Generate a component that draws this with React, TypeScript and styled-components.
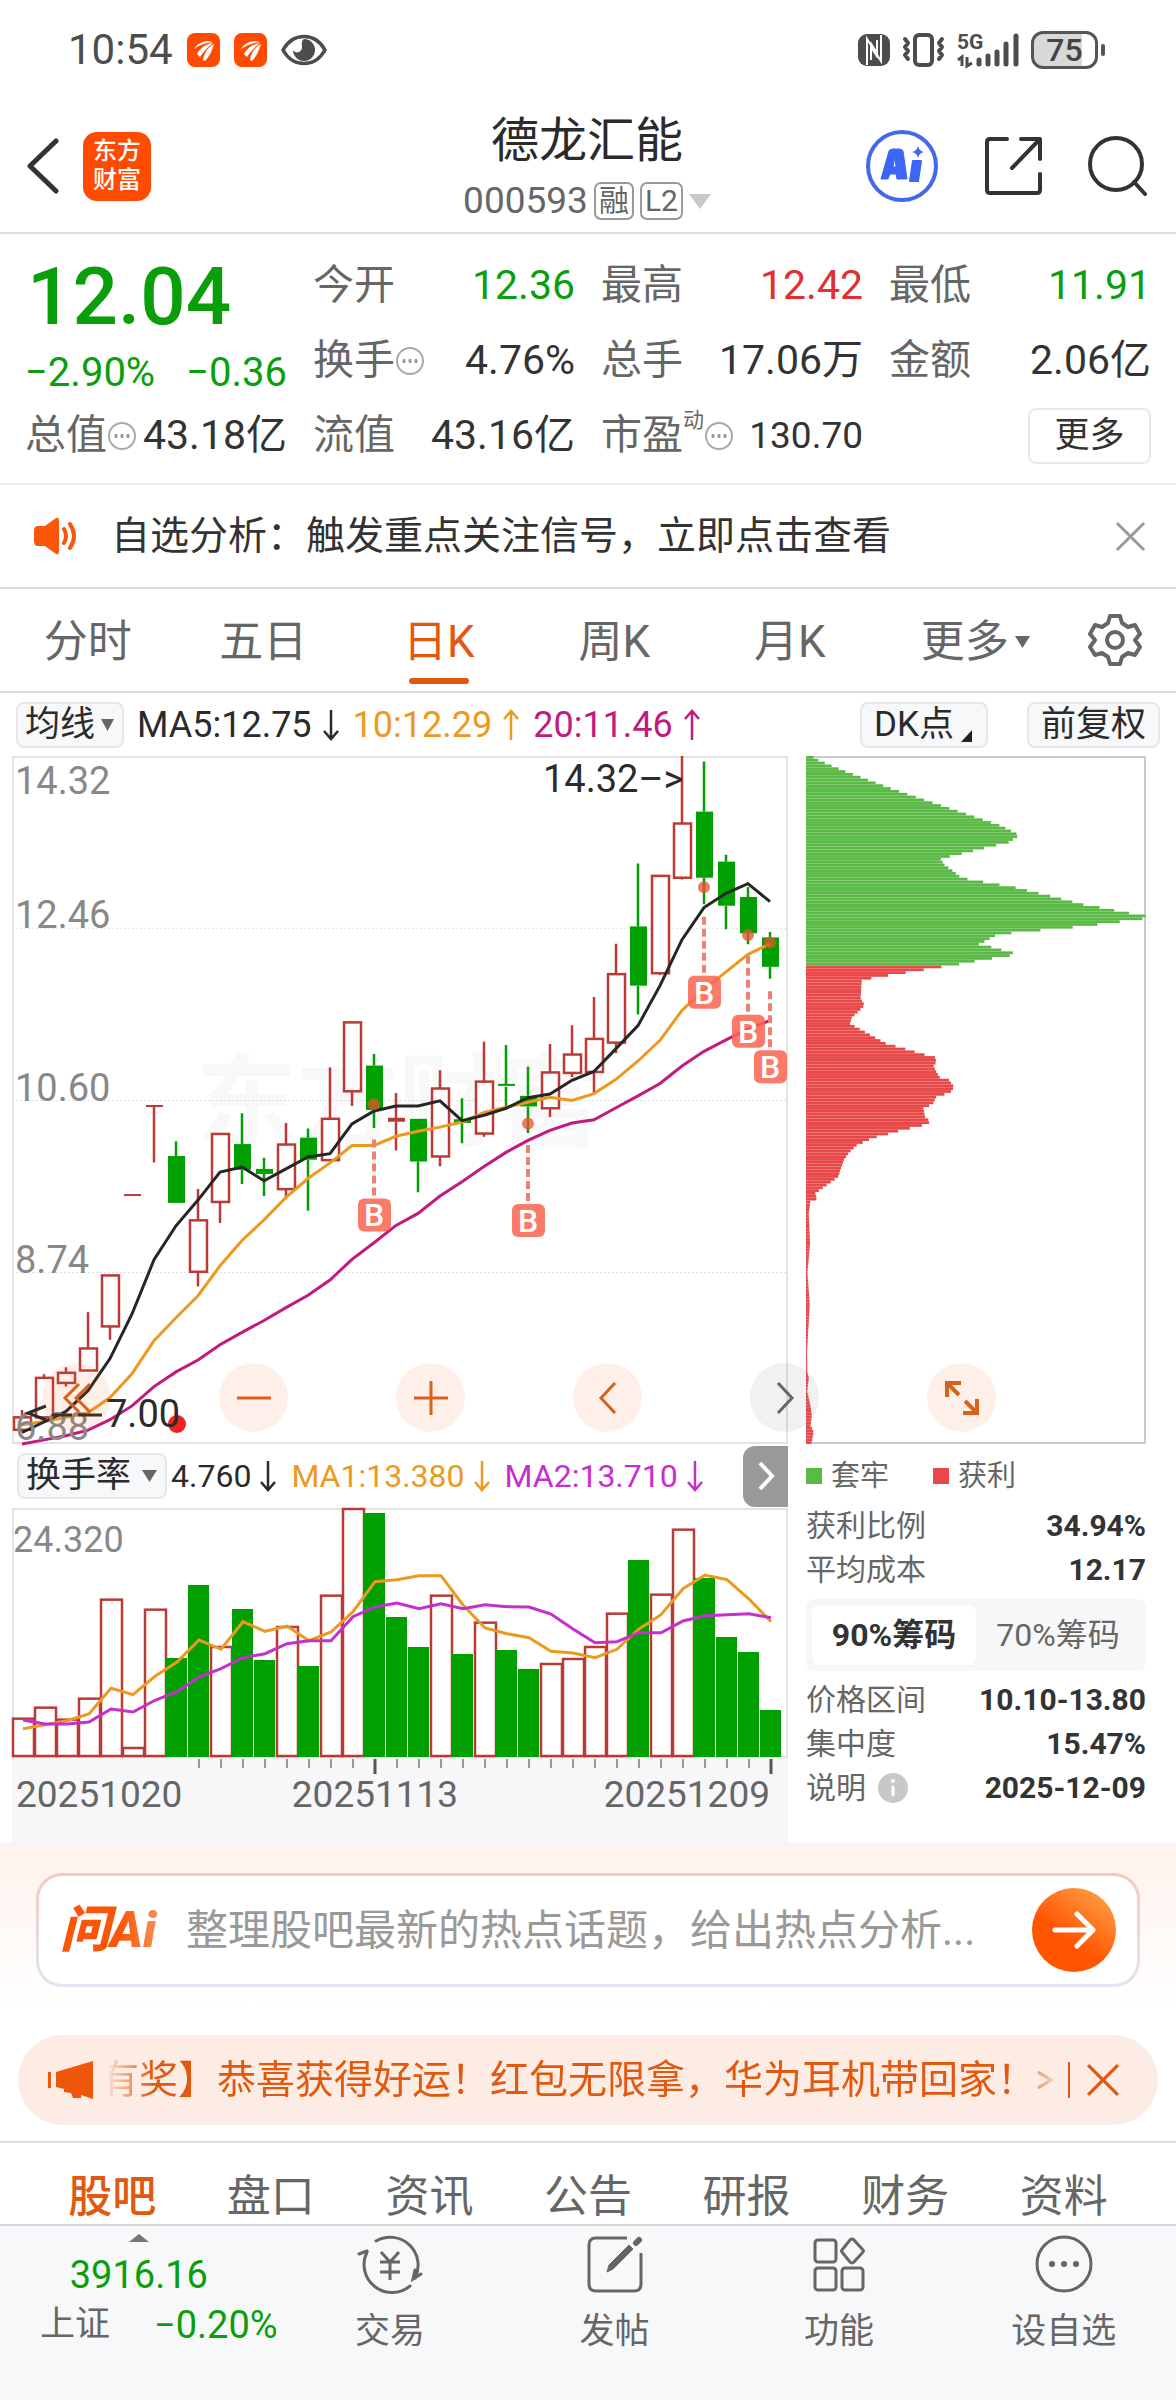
import React, { useState } from "react";
import styled, { createGlobalStyle, css } from "styled-components";

const c = {
  ink: "#2b2b2b",
  text: "#333333",
  sub: "#666666",
  mute: "#999999",
  green: "#0b9e0b",
  red: "#e03030",
  brand: "#e2580f",
  line: "#dddddd",
  up: "#bb3a36",
  down: "#00a000",
  ma5: "#262626",
  ma10: "#ec9a1f",
  ma20: "#c01c80",
  violet: "#c530cc",
};

const Global = createGlobalStyle`
  * { box-sizing: border-box; }
  body { margin: 0; background: #fff; }
  body, button, input, select {
    font-family: Roboto, "Noto Sans CJK SC", sans-serif;
    color: ${c.text};
  }
  button, input, select { margin: 0; padding: 0; border: 0; background: none; appearance: none; outline: none; }
  svg { display: block; flex: none; }
  h1, p, dl, dt, dd { margin: 0; font-weight: 400; }
`;

const Page = styled.div`
  display: flex;
  flex-direction: column;
  min-height: 100vh;
  background: #fff;
`;

const Row = styled.div<{ $gap?: number }>`
  display: flex;
  align-items: center;
  gap: ${(p) => p.$gap ?? 0}px;
`;

/* ---------- status bar ---------- */

const StatusBar = styled.div`
  display: flex;
  align-items: center;
  justify-content: space-between;
  height: 100px;
  padding: 0 78px 0 68px;
`;

const Clock = styled.span`
  font-size: 42px;
  line-height: 48px;
  color: #4d4d4d;
`;

const Battery = styled.div`
  position: relative;
  display: flex;
  align-items: center;
  justify-content: center;
  width: 67px;
  height: 38px;
  border: 3px solid #555;
  border-radius: 12px;
  background: linear-gradient(90deg, #d8d8d8 78%, #fff 78%);
  font-size: 32px;
  line-height: 32px;
  font-weight: 500;
  color: #444;
  &::after {
    content: "";
    position: absolute;
    right: -10px;
    top: 10px;
    width: 4px;
    height: 12px;
    border-radius: 2px;
    background: #555;
  }
`;

const AppMark = () => (
  <svg width="33" height="34" viewBox="0 0 33 34">
    <rect width="33" height="34" rx="8" fill="#ff4a00" />
    <path d="M7 16C11 9 19 7 26 9C18 10 13 12 7 16Z" fill="#fff" />
    <path d="M10 21C13 15 19 11 26 10C21 14 17 18 13 24Z" fill="#fff" />
    <path d="M16 27C17 20 21 14 27 11C25 17 23 23 18 28Z" fill="#fff" />
  </svg>
);

const Eye = () => (
  <svg width="46" height="32" viewBox="0 0 46 32">
    <path d="M2 16C12 -2 34 -2 44 16C34 34 12 34 2 16Z" fill="none" stroke="#4d4d4d" strokeWidth="3.500" />
    <path d="M23 5A11 11 0 1 1 12 16C14 20 21 19 21 13C21 10 20 7 23 5Z" fill="#4d4d4d" />
  </svg>
);

const Nfc = () => (
  <svg width="32" height="32" viewBox="0 0 32 32">
    <rect width="32" height="32" rx="9" fill="#4d4d4d" />
    <path d="M9 31V5L23 27V1" fill="none" stroke="#fff" strokeWidth="2" />
    <path d="M13 26V13L20 24M19 6V19L12 8" fill="none" stroke="#fff" strokeWidth="2" />
  </svg>
);

const Vibrate = () => (
  <svg width="43" height="34" viewBox="0 0 43 34">
    <rect x="13" y="2" width="17" height="30" rx="4" fill="none" stroke="#4d4d4d" strokeWidth="4" />
    <path d="M3 6L6 10L3 14L6 18L3 22L6 26M40 6L37 10L40 14L37 18L40 22L37 26" fill="none" stroke="#4d4d4d" strokeWidth="4" strokeLinecap="round" strokeLinejoin="round" />
  </svg>
);

const Signal = () => (
  <svg width="62" height="42" viewBox="0 -3 62 42">
    <text x="0" y="17" fontSize="21" fontWeight="700" fill="#4d4d4d">5G</text>
    <path d="M1 28L5 25V34M10 25V34L15 31" fill="none" stroke="#4d4d4d" strokeWidth="3" />
    <path d="M22 28V32M31 24V32M40 20V32M49 12V32M59 4V32" stroke="#4d4d4d" strokeWidth="5" strokeLinecap="round" />
  </svg>
);

/* ---------- header ---------- */

const Header = styled.header`
  display: grid;
  grid-template-columns: 1fr auto 1fr;
  align-items: center;
  height: 134px;
  padding: 0 28px 0 26px;
  border-bottom: 2px solid ${c.line};
`;

const IconButton = styled.button`
  display: flex;
  align-items: center;
  justify-content: center;
  cursor: pointer;
`;

const Brand = styled.div`
  display: flex;
  flex-direction: column;
  align-items: center;
  justify-content: center;
  width: 68px;
  height: 69px;
  border-radius: 14px;
  background: #ff4a00;
  color: #fff;
  font-size: 24px;
  line-height: 29px;
  font-weight: 500;
`;

const Heading = styled.div`
  padding-top: 6px;
`;

const Title = styled.h1`
  font-size: 48px;
  line-height: 64px;
  color: ${c.ink};
  text-align: center;
`;

const CodeRow = styled(Row)`
  height: 56px;
  font-size: 37px;
  line-height: 56px;
  color: ${c.sub};
`;

const Badge = styled.span`
  height: 38px;
  padding: 0 3px;
  border: 2px solid ${c.mute};
  border-radius: 7px;
  font-size: 30px;
  line-height: 34px;
  color: ${c.sub};
`;

const HeaderTools = styled(Row)`
  justify-content: flex-end;
`;

const Triangle = ({ w, h, fill, up }: { w: number; h: number; fill: string; up?: boolean }) => (
  <svg width={w} height={h} viewBox="0 0 10 10" preserveAspectRatio="none">
    <path d={up ? "M0 10H10L5 0Z" : "M0 0H10L5 10Z"} fill={fill} />
  </svg>
);

const AiBadge = () => (
  <svg width="74" height="74" viewBox="0 0 74 74">
    <circle cx="37" cy="37" r="34" fill="none" stroke="#4468ea" strokeWidth="4" />
    <path d="M16 50L24 22Q25 20 28 20H34Q37 20 38 22L42 50H32L31 45H25L23 50ZM28 38H31L30 28Z" fill="#3e66f6" fillRule="evenodd" stroke="#3e66f6" strokeWidth="1" strokeLinejoin="round" />
    <path d="M48 32H56L53 52H45Z" fill="#3e66f6" stroke="#3e66f6" strokeWidth="2" strokeLinejoin="round" />
    <path d="M53 17Q54 22 59 23Q54 24 53 29Q52 24 47 23Q52 22 53 17Z" fill="#3e66f6" />
  </svg>
);

const Share = () => (
  <svg width="59" height="60" viewBox="0 0 59 60" fill="none" stroke="#333" strokeWidth="4" strokeLinecap="round" strokeLinejoin="round">
    <path d="M23 3H6Q3 3 3 6V54Q3 57 6 57H53Q56 57 56 54V38" />
    <path d="M37 3H56V23M55 4L28 32" />
  </svg>
);

const Search = () => (
  <svg width="60" height="60" viewBox="0 0 60 60" fill="none" stroke="#333" strokeWidth="4" strokeLinecap="round">
    <circle cx="28" cy="28" r="26" />
    <path d="M46 46L57 58" />
  </svg>
);

/* ---------- quote ---------- */

const Quote = styled.section`
  display: grid;
  grid-template-columns: repeat(4, 1fr);
  grid-auto-rows: 75px;
  column-gap: 26px;
  padding: 14px 25px 10px;
  border-bottom: 2px solid #eeeeee;
`;

const PriceCell = styled.div`
  grid-row: span 2;
`;

const Price = styled.p`
  font-size: 80px;
  line-height: 98px;
  font-weight: 500;
  color: ${c.green};
  padding-left: 2px;
`;

const Change = styled.p`
  display: flex;
  justify-content: space-between;
  font-size: 40px;
  line-height: 54px;
  color: ${c.green};
`;

const Field = styled.div`
  display: flex;
  align-items: center;
  justify-content: space-between;
  white-space: nowrap;
  font-size: 41px;
  line-height: 75px;
`;

const FieldLabel = styled.span`
  display: flex;
  align-items: center;
  color: ${c.sub};
`;

const Tiny = styled.sup`
  align-self: flex-start;
  font-size: 21px;
  line-height: 44px;
`;

const FieldValue = styled.span<{ $tone?: string; $small?: boolean }>`
  font-size: ${(p) => (p.$small ? 37 : 41)}px;
  color: ${(p) => p.$tone ?? c.text};
`;

const MoreButton = styled.button`
  justify-self: end;
  align-self: center;
  width: 123px;
  height: 56px;
  border: 2px solid #e8e8e8;
  border-radius: 8px;
  font-size: 35px;
  line-height: 48px;
`;

const Dots = () => (
  <svg width="30" height="30" viewBox="0 0 30 30">
    <circle cx="15" cy="15" r="13" fill="none" stroke="#aaa" strokeWidth="2" />
    <path d="M8 13.500H10V16.500H8ZM14 13.500H16V16.500H14ZM20 13.500H22V16.500H20Z" fill="#999" stroke="#999" />
  </svg>
);

/* ---------- notice ---------- */

const Notice = styled.section`
  display: flex;
  align-items: center;
  height: 104px;
  padding: 0 30px 0 32px;
  border-bottom: 2px solid ${c.line};
`;

const NoticeText = styled.p`
  flex: 1;
  padding-left: 33px;
  font-size: 39px;
  line-height: 56px;
`;

const Speaker = () => (
  <svg width="46" height="38" viewBox="0 0 46 38">
    <path d="M2 14Q2 9 6 9H13L24 1Q27 0 27 4V34Q27 38 24 37L13 29H6Q2 29 2 24Z" fill="#fb5607" />
    <path d="M32 12Q36 19 32 26M38 7Q46 19 38 31" fill="none" stroke="#fb5607" strokeWidth="4" strokeLinecap="round" />
  </svg>
);

const Cross = ({ size, color, width }: { size: number; color: string; width: number }) => (
  <svg width={size} height={size} viewBox="0 0 32 32">
    <path d="M2 2L30 30M30 2L2 30" stroke={color} strokeWidth={width} fill="none" />
  </svg>
);

/* ---------- tabs ---------- */

const PeriodTabs = styled.nav`
  display: grid;
  grid-template-columns: repeat(6, 351fr) 246fr;
  height: 104px;
  border-bottom: 2px solid ${c.line};
`;

const Tab = styled.button<{ $on?: boolean }>`
  position: relative;
  display: flex;
  align-items: center;
  justify-content: center;
  gap: 6px;
  font-size: 44px;
  line-height: 64px;
  color: ${(p) => (p.$on ? c.brand : c.sub)};
  font-weight: ${(p) => (p.$on ? 500 : 400)};
`;

const PeriodTab = styled(Tab)`
  padding-top: 3px;
  font-weight: 400;
  ${(p) =>
    p.$on &&
    css`
      &::after {
        content: "";
        position: absolute;
        bottom: 7px;
        left: 50%;
        width: 60px;
        height: 6px;
        margin-left: -30px;
        border-radius: 3px;
        background: ${c.brand};
      }
    `}
`;

const MoreTab = styled(PeriodTab)`
  padding-left: 20px;
`;

const Gear = () => (
  <svg width="54" height="54" viewBox="0 0 54 54" fill="none" stroke="#666" strokeWidth="4" strokeLinejoin="round">
    <path d="M22 3H32L34 10L40 14L47 12L52 21L47 27L52 34L47 42L40 40L34 44L32 51H22L20 44L14 40L7 42L2 34L7 27L2 21L7 12L14 14L20 10Z" />
    <circle cx="27" cy="27" r="8" />
  </svg>
);

/* ---------- indicator bar ---------- */

const IndicatorBar = styled.div`
  display: flex;
  align-items: center;
  justify-content: space-between;
  height: 63px;
  padding: 0 16px;
`;

const chip = css`
  height: 46px;
  border: 2px solid #e6e7ea;
  border-radius: 8px;
  background: #f7f8fa;
  font-size: 35px;
  line-height: 42px;
  white-space: nowrap;
`;

const ChipButton = styled.button`
  ${chip}
  display: flex;
  align-items: center;
  padding: 0 12px;
  color: ${c.ink};
`;

const SelectBox = styled.label<{ $w: number }>`
  ${chip}
  display: flex;
  align-items: center;
  justify-content: space-between;
  width: ${(p) => p.$w}px;
  padding: 0 8px 0 7px;
`;

const Select = styled.select`
  flex: 1;
  min-width: 0;
  height: 42px;
  font-size: 35px;
  line-height: 42px;
  color: ${c.ink};
`;

const Reading = styled.span<{ $tone: string; $small?: boolean }>`
  display: flex;
  align-items: center;
  gap: ${(p) => (p.$small ? 8 : 10)}px;
  font-size: ${(p) => (p.$small ? 32 : 36)}px;
  line-height: 46px;
  color: ${(p) => p.$tone};
  white-space: nowrap;
`;

const Arrow = ({ up }: { up?: boolean }) => (
  <svg width="18" height="32" viewBox="0 0 18 32" fill="none" stroke="currentColor" strokeWidth="2.500">
    <path d={up ? "M9 31V2M2 10L9 2L16 10" : "M9 1V30M2 22L9 30L16 22"} />
  </svg>
);

/* ---------- charts ---------- */

const ChartGrid = styled.section`
  position: relative;
  display: grid;
  grid-template-columns: 776fr 340fr;
  column-gap: 18px;
  padding: 0 30px 0 12px;
`;

const Plot = styled.svg`
  width: 100%;
  height: auto;
  overflow: visible;
`;

const Floating = styled.div`
  position: absolute;
  top: 607px;
  left: 42px;
  display: flex;
  gap: 108px;
`;

const RoundButton = styled.button<{ $grey?: boolean }>`
  display: flex;
  align-items: center;
  justify-content: center;
  width: 69px;
  height: 69px;
  border-radius: 50%;
  color: ${(p) => (p.$grey ? "#666" : "#d8611b")};
  background: ${(p) => (p.$grey ? "rgba(120,120,120,0.1)" : "rgba(250,110,40,0.1)")};
`;

const SubBar = styled.div`
  display: flex;
  align-items: center;
  height: 64px;
  padding-left: 5px;
`;

const Expand = styled.button`
  display: flex;
  align-items: center;
  justify-content: center;
  width: 45px;
  height: 61px;
  margin-left: auto;
  border-radius: 12px 0 0 12px;
  background: #999;
`;

const SubReadings = styled(Row)`
  padding-left: 4px;
`;

type Candle = [kind: "u" | "d", high: number, open: number, close: number, low: number];

// Plot units run downward from the top edge of the price frame to its bottom edge.
const TOP = 35;
const BOTTOM = 1533;
const py = (v: number) => ((v - TOP) / (BOTTOM - TOP)) * 688;
const px = (i: number) => 10 + i * 22;

const candles: Candle[] = [
  ["u", 1459, 1475, 1502, 1502], ["u", 1381, 1389, 1475, 1475], ["u", 1366, 1378, 1400, 1408],
  ["u", 1246, 1325, 1373, 1373], ["u", 1166, 1166, 1277, 1306], ["u", 991, 991, 991, 991],
  ["u", 797, 797, 797, 920], ["d", 874, 906, 1008, 1008], ["u", 978, 1046, 1158, 1190],
  ["u", 858, 858, 1006, 1052], ["d", 813, 880, 936, 967], ["d", 910, 934, 945, 993],
  ["u", 834, 881, 978, 995], ["d", 846, 866, 914, 1025], ["u", 713, 825, 915, 915],
  ["u", 615, 615, 765, 797], ["d", 684, 709, 806, 845], ["u", 769, 827, 831, 894],
  ["d", 825, 825, 918, 985], ["u", 719, 759, 907, 928], ["d", 780, 826, 834, 878],
  ["u", 657, 744, 857, 864], ["d", 664, 751, 755, 797], ["d", 711, 775, 798, 856],
  ["u", 662, 724, 802, 821], ["u", 621, 685, 725, 734], ["u", 560, 651, 723, 770],
  ["u", 444, 510, 659, 682], ["d", 269, 406, 535, 598], ["u", 296, 296, 508, 512],
  ["u", 35, 182, 300, 304], ["d", 47, 156, 300, 358], ["d", 250, 265, 361, 412],
  ["d", 320, 342, 421, 445], ["d", 418, 430, 494, 520],
];

const ma5 = [1508, 1485, 1462, 1417, 1347, 1250, 1132, 1058, 1002, 941, 930, 960, 934, 908, 901, 836, 808, 797, 797, 786, 829, 817, 802, 779, 771, 741, 722, 672, 622, 535, 435, 365, 334, 313, 352];
const ma10 = [1491, 1484, 1475, 1465, 1432, 1380, 1308, 1258, 1210, 1145, 1090, 1045, 996, 955, 921, 883, 883, 863, 852, 843, 832, 811, 800, 789, 778, 785, 770, 739, 699, 654, 589, 543, 505, 467, 444];
const ma20 = [1533, 1524, 1515, 1503, 1480, 1450, 1408, 1376, 1350, 1317, 1290, 1264, 1236, 1209, 1176, 1131, 1095, 1057, 1031, 993, 962, 929, 898, 872, 850, 834, 827, 801, 775, 748, 710, 678, 653, 629, 611];

const buys = [
  { i: 16, dot: 793, from: 870 },
  { i: 23, dot: 835, from: 882 },
  { i: 31, dot: 321, from: 385 },
  { i: 33, dot: 425, from: 470 },
  { i: 34, dot: 441, from: 547 },
];

const line = (vals: number[], x: (i: number) => number, y: (v: number) => number) =>
  vals.map((v, i) => `${x(i)},${y(v).toFixed(1)}`).join(" ");

const PriceChart = () => (
  <Plot viewBox="0 0 776 688" role="img" aria-label="日K线">
    <text x="184" y="382" fontSize="101" fontWeight="700" fill="#f8f8f9">东方财富</text>
    {[410, 785, 1160].map((v) => (
      <path key={v} d={`M0 ${py(v)}H776`} stroke="#ddd" strokeDasharray="2 2" />
    ))}
    <rect x="1" y="1" width="774" height="686" fill="none" stroke="#e3e3e3" strokeWidth="2" />
    {candles.map(([kind, high, a, b, low], i) => {
      const x = px(i);
      const color = kind === "u" ? c.up : c.down;
      const flat = b - a < 6;
      return (
        <g key={i} stroke={color} strokeWidth="2.500">
          <path d={`M${x} ${py(high)}V${py(a)}M${x} ${py(b)}V${py(low)}`} />
          {flat ? (
            <path d={`M${x - 8} ${py(a)}H${x + 9}`} strokeWidth={b - a === 4 && kind === "u" ? 4 : 2} />
          ) : kind === "u" ? (
            <rect x={x - 8} y={py(a)} width="17" height={py(b) - py(a)} fill="#fff" />
          ) : (
            <rect x={x - 8} y={py(a)} width="17" height={py(b) - py(a)} fill={color} stroke="none" />
          )}
        </g>
      );
    })}
    <polyline points={line(ma20, px, py)} fill="none" stroke={c.ma20} strokeWidth="3" />
    <polyline points={line(ma10, px, py)} fill="none" stroke={c.ma10} strokeWidth="3" />
    <polyline points={line(ma5, px, py)} fill="none" stroke={c.ma5} strokeWidth="3" />
    {buys.map(({ i, dot, from }) => {
      const x = px(i);
      const y = py(from);
      return (
        <g key={i}>
          <circle cx={x} cy={py(dot)} r="6" fill="#e8502f" opacity="0.75" />
          <path d={`M${x} ${y}V${y + 57}`} stroke="#f08070" strokeWidth="4" strokeDasharray="8 4" />
          <rect x={x - 16} y={y + 59} width="33" height="33" rx="6" fill="#fa6450" opacity="0.85" />
          <text x={x} y={y + 87} fontSize="32" fontWeight="500" fill="#fff" textAnchor="middle">B</text>
        </g>
      );
    })}
    <g fontSize="38" fill="#888">
      <text x="3" y="38">14.32</text>
      <text x="3" y="172">12.46</text>
      <text x="3" y="345">10.60</text>
      <text x="3" y="517">8.74</text>
      <text x="3" y="684">6.88</text>
    </g>
    <text x="531" y="36" fontSize="38" fill={c.ink}>14.32–&gt;</text>
    <circle cx="165" cy="668" r="9" fill="#f02222" />
    <text x="94" y="671" fontSize="38" fill={c.ink}>7.00</text>
    <path d="M34 650L16 657L34 664M40 659H60M66 659H90" fill="none" stroke={c.ink} strokeWidth="3" />
  </Plot>
);

// Turnover bars use their own downward units.
const vy = (v: number) => ((v - 234) / (978 - 234)) * 248;
const vx = (i: number) => 11 + i * 22;

const turnover: [string, number][] = [
  ["u", 866], ["u", 833], ["u", 869], ["u", 806], ["u", 509], ["u", 954], ["u", 539], ["d", 684], ["d", 465],
  ["u", 651], ["d", 537], ["d", 690], ["u", 591], ["d", 708], ["u", 497], ["u", 237], ["d", 249], ["d", 561],
  ["d", 651], ["u", 497], ["d", 672], ["u", 578], ["d", 660], ["d", 717], ["u", 702], ["u", 687], ["u", 651],
  ["u", 551], ["d", 390], ["u", 494], ["u", 299], ["d", 444], ["d", 621], ["d", 666], ["d", 840],
];
const tm1 = [896, 884, 872, 852, 775, 794, 739, 696, 630, 658, 575, 604, 588, 632, 606, 545, 455, 449, 437, 437, 525, 594, 611, 623, 664, 669, 683, 658, 597, 554, 476, 435, 449, 507, 575];
const tm2 = [870, 882, 882, 876, 837, 846, 811, 785, 741, 716, 683, 671, 641, 632, 632, 560, 531, 519, 536, 521, 536, 524, 530, 531, 552, 597, 638, 635, 608, 608, 573, 557, 554, 551, 563];

const TurnoverChart = () => (
  <Plot viewBox="0 0 776 335" role="img" aria-label="换手率">
    <rect y="250" width="776" height="85" fill="#f7f7fa" />
    <rect x="1" y="1" width="774" height="248" fill="none" stroke="#e3e3e3" strokeWidth="2" />
    {turnover.map(([kind, v], i) =>
      kind === "u" ? (
        <rect key={i} x={vx(i) - 10} y={vy(v)} width="21" height={248 - vy(v)} fill="#fff" stroke={c.up} strokeWidth="2.500" />
      ) : (
        <rect key={i} x={vx(i) - 11} y={vy(v)} width="21" height={249 - vy(v)} fill={c.down} />
      )
    )}
    <polyline points={line(tm1, vx, vy)} fill="none" stroke={c.ma10} strokeWidth="3" />
    <polyline points={line(tm2, vx, vy)} fill="none" stroke={c.violet} strokeWidth="3" />
    <text x="1" y="44" fontSize="36" fill="#888">24.320</text>
    {Array.from({ length: 27 }, (_, k) => k + 8).map((i) => {
      const major = i === 16 || i === 34;
      return <path key={i} d={`M${vx(i)} 251V${major ? 266 : 260}`} stroke={major ? "#555" : "#999"} strokeWidth={major ? 3 : 2} />;
    })}
    <g fontSize="37" fill={c.sub}>
      <text x="4" y="299">20251020</text>
      <text x="363" y="299" textAnchor="middle">20251113</text>
      <text x="758" y="299" textAnchor="end">20251209</text>
    </g>
  </Plot>
);

// Chip distribution outline: [level, width] knots, rows between them are interpolated.
const knots: [number, number][] = [
  [35, 10], [48, 40], [72, 120], [110, 260], [150, 423], [190, 585], [208, 633], [213, 622], [220, 610], [232, 538],
  [245, 468], [251, 433], [256, 400], [262, 403], [275, 415], [288, 440], [300, 460], [306, 485], [312, 532],
  [324, 627], [330, 660], [342, 728], [361, 830], [367, 877], [380, 970], [386, 1018], [392, 952], [398, 887],
  [404, 822], [410, 728], [416, 634], [422, 571], [435, 538], [447, 505], [453, 552], [460, 586], [466, 620],
  [472, 568], [478, 516], [485, 464], [491, 412], [497, 361], [503, 308], [509, 257], [515, 205], [521, 167],
  [565, 163], [577, 173], [590, 155], [602, 137], [620, 130], [632, 160], [650, 205], [663, 238], [675, 295],
  [687, 350], [693, 386], [700, 389], [710, 380], [725, 390], [737, 400], [743, 428], [756, 441], [763, 434],
  [770, 412], [775, 390], [790, 380], [800, 350], [825, 357], [831, 369], [837, 347], [843, 312], [850, 272],
  [856, 243], [862, 210], [868, 188], [875, 167], [880, 152], [895, 130], [910, 115], [935, 102], [947, 98],
  [953, 88], [965, 65], [978, 40], [985, 28], [990, 22], [997, 32], [1003, 13], [1030, 8], [1095, 12], [1160, 4],
  [1230, 11], [1330, 3], [1380, 4], [1390, 8], [1420, 3], [1447, 12], [1470, 17], [1495, 13], [1508, 22], [1533, 15],
];

const widthAt = (v: number) => {
  const k = Math.max(1, knots.findIndex(([level]) => level >= v));
  const [v0, w0] = knots[k - 1];
  const [v1, w1] = knots[k];
  return w0 + ((w1 - w0) * (v - v0)) / (v1 - v0);
};

const ROWS = 243;
const STEP = (BOTTOM - TOP) / ROWS;

const ChipChart = () => (
  <Plot viewBox="0 0 340 688" role="img" aria-label="筹码分布">
    <path d="M0 1H339V687H0" fill="none" stroke="#c9c9c9" strokeWidth="2" />
    {Array.from({ length: ROWS }, (_, r) => {
      const v = TOP + STEP * (r + 0.5);
      const w = Math.max(widthAt(v - STEP * 0.4), widthAt(v), widthAt(v + STEP * 0.4));
      return (
        <rect
          key={r}
          y={py(TOP + STEP * r)}
          width={(w / 1018) * 340}
          height={688 / ROWS - 0.05}
          fill={v < 493 ? "#5bba45" : "#e84848"}
        />
      );
    })}
  </Plot>
);

/* ---------- chip stats ---------- */

const Legend = styled(Row)`
  height: 60px;
  padding-top: 4px;
  font-size: 29px;
  line-height: 44px;
  color: ${c.sub};
`;

const Swatch = styled.span<{ $c: string }>`
  width: 16px;
  height: 16px;
  margin-right: 9px;
  background: ${(p) => p.$c};
`;

const LegendItem = styled(Row)`
  margin-right: 44px;
`;

const Stat = styled.div`
  display: flex;
  justify-content: space-between;
  align-items: center;
  font-size: 30px;
  line-height: 44px;
  color: ${c.sub};
`;

const StatName = styled.dt`
  display: flex;
  align-items: center;
  gap: 12px;
`;

const StatValue = styled.dd`
  font-weight: 700;
  color: ${c.text};
`;

const Segmented = styled.div`
  display: grid;
  grid-template-columns: 1fr 1fr;
  height: 72px;
  margin: 7px 0;
  padding: 6px;
  border-radius: 8px;
  background: #f7f7fa;
`;

const Segment = styled.button<{ $on: boolean }>`
  border-radius: 8px;
  font-size: 32px;
  line-height: 44px;
  white-space: nowrap;
  ${(p) =>
    p.$on
      ? css`
          background: #fff;
          font-weight: 700;
          color: ${c.text};
        `
      : css`
          color: ${c.sub};
        `}
`;

const Info = () => (
  <svg width="30" height="30" viewBox="0 0 30 30">
    <circle cx="15" cy="15" r="15" fill="#c8c8c8" />
    <path d="M15 14V22" stroke="#fff" strokeWidth="3" strokeLinecap="round" />
    <circle cx="15" cy="8" r="2" fill="#fff" />
  </svg>
);

/* ---------- ask ai ---------- */

const AskSection = styled.section`
  padding: 30px 36px 48px;
  background: linear-gradient(#fff2ed, #ffffff 85%);
`;

const AskBox = styled.form`
  display: flex;
  align-items: center;
  height: 114px;
  padding: 0 21px;
  border: 3px solid transparent;
  border-radius: 26px;
  background: linear-gradient(#fff, #fff) padding-box, linear-gradient(#f5c9c1, #dfe6f2) border-box;
`;

const AskLogo = styled.span`
  width: 100px;
  font-size: 50px;
  line-height: 56px;
  font-style: italic;
  font-weight: 900;
  white-space: nowrap;
  color: transparent;
  background: linear-gradient(90deg, #fb5607 60%, #f8905c);
  background-clip: text;
`;

const AskInput = styled.input`
  flex: 1;
  min-width: 0;
  height: 60px;
  padding-left: 26px;
  font-size: 42px;
  &::placeholder {
    color: ${c.mute};
    opacity: 1;
  }
`;

const Send = styled.button`
  display: flex;
  align-items: center;
  justify-content: center;
  width: 84px;
  height: 84px;
  border-radius: 50%;
  background: linear-gradient(215deg, #ff9c45 10%, #ff5500 60%);
`;

/* ---------- banner ---------- */

const Banner = styled.aside`
  display: flex;
  align-items: center;
  height: 90px;
  margin: 0 18px 16px;
  padding: 0 38px 0 29px;
  border-radius: 45px;
  background: #fcece3;
  color: ${c.brand};
`;

const Marquee = styled.div`
  flex: 1;
  min-width: 0;
  display: flex;
  justify-content: flex-end;
  align-items: center;
  overflow: hidden;
  margin: 0 14px;
  font-size: 39px;
  line-height: 56px;
  white-space: nowrap;
  mask-image: linear-gradient(90deg, rgba(0, 0, 0, 0.1), #000 44px, #000 calc(100% - 40px), rgba(0, 0, 0, 0.2));
`;

const Divider = styled.span`
  width: 2px;
  height: 36px;
  margin-right: 16px;
  background: ${c.brand};
`;

const Horn = () => (
  <svg width="48" height="40" viewBox="0 0 48 40" fill="#ee560a">
    <path d="M1 12H4V28H1ZM9 12L46 1V39L34 35V38H26L24 33L17 32V29L9 27Z" />
  </svg>
);

/* ---------- section tabs and bottom nav ---------- */

const SectionTabs = styled.nav`
  display: grid;
  grid-template-columns: repeat(7, 1fr);
  height: 83px;
  padding: 22px 33px 0;
  border-top: 2px solid ${c.line};
`;

const BottomNav = styled.nav`
  flex: 1;
  display: grid;
  grid-template-columns: 275fr repeat(4, 225fr);
  align-items: start;
  min-height: 176px;
  border-top: 2px solid #d6d7dc;
  background: #f7f8fa;
`;

const IndexCell = styled.button`
  display: flex;
  flex-direction: column;
  align-items: center;
  padding-top: 8px;
  font-size: 38px;
  line-height: 50px;
  color: ${c.green};
`;

const IndexValue = styled.span`
  padding-top: 8px;
`;

const IndexRow = styled(Row)`
  font-size: 38px;
  padding-left: 40px;
  align-self: stretch;
`;

const IndexName = styled.span`
  width: 114px;
  font-size: 35px;
  color: ${c.sub};
  text-align: left;
`;

const NavItem = styled.button`
  display: flex;
  flex-direction: column;
  align-items: center;
  gap: 13px;
  padding-top: 8px;
  font-size: 35px;
  line-height: 50px;
  color: ${c.sub};
`;

const navStroke = { fill: "none", stroke: "#666", strokeWidth: 3 } as const;

const Trade = () => (
  <svg width="66" height="60" viewBox="0 0 66 60" {...navStroke} strokeLinecap="round">
    <path d="M19 7A28 28 0 0 1 58 44M53 52A28 28 0 0 1 10 18" />
    <path d="M2 20L10 17M64 40L56 45L58 36" />
    <path d="M24 18L33 28L42 18M23 28H43M23 38H43M33 28V46" strokeLinecap="butt" />
  </svg>
);

const Compose = () => (
  <svg width="56" height="60" viewBox="0 0 56 60" {...navStroke}>
    <path d="M40 4H9Q2 4 2 11V50Q2 57 9 57H47Q54 57 54 50V19" />
    <path d="M20 38L22 31L42 11L46 15L26 35Z" fill="#666" strokeWidth="1" />
    <path d="M49 9L52 6" strokeWidth="6" strokeLinecap="round" />
  </svg>
);

const Features = () => (
  <svg width="54" height="60" viewBox="0 0 54 60" {...navStroke}>
    <rect x="3" y="6" width="21" height="22" rx="3" />
    <rect x="3" y="34" width="21" height="22" rx="3" />
    <rect x="30" y="34" width="21" height="22" rx="3" />
    <path d="M40 5Q41 5 42 6L51 16Q52 17 51 18L42 28Q40 30 38 28L30 18Q29 17 30 16L38 6Q39 5 40 5Z" />
  </svg>
);

const Ellipsis = () => (
  <svg width="60" height="60" viewBox="0 0 60 60" {...navStroke}>
    <circle cx="30" cy="30" r="27" />
    <path d="M18 30H18.100M30 30H30.100M42 30H42.100" strokeWidth="6" strokeLinecap="round" />
  </svg>
);

const periods = ["分时", "五日", "日K", "周K", "月K"];
const sections = ["股吧", "盘口", "资讯", "公告", "研报", "财务", "资料"];

export default function App() {
  const [period, setPeriod] = useState("日K");
  const [section, setSection] = useState("股吧");
  const [range, setRange] = useState("90%筹码");

  return (
    <Page>
      <Global />
      <StatusBar>
        <Row $gap={14}>
          <Clock>10:54</Clock>
          <AppMark />
          <AppMark />
          <Eye />
        </Row>
        <Row $gap={12}>
          <Nfc />
          <Vibrate />
          <Signal />
          <Battery>75</Battery>
        </Row>
      </StatusBar>

      <Header>
        <Row $gap={24}>
          <IconButton aria-label="返回">
            <svg width="33" height="56" viewBox="0 0 33 56" fill="none" stroke="#333" strokeWidth="5" strokeLinecap="round" strokeLinejoin="round">
              <path d="M30 3L4 28L30 53" />
            </svg>
          </IconButton>
          <Brand>
            <span>东方</span>
            <span>财富</span>
          </Brand>
        </Row>
        <Heading>
          <Title>德龙汇能</Title>
          <CodeRow $gap={6}>
            000593
            <Badge>融</Badge>
            <Badge>L2</Badge>
            <Triangle w={22} h={15} fill="#c8c8c8" />
          </CodeRow>
        </Heading>
        <HeaderTools $gap={45}>
          <IconButton aria-label="AI"><AiBadge /></IconButton>
          <IconButton aria-label="分享"><Share /></IconButton>
          <IconButton aria-label="搜索"><Search /></IconButton>
        </HeaderTools>
      </Header>

      <Quote>
        <PriceCell>
          <Price>12.04</Price>
          <Change>
            <span>−2.90%</span>
            <span>−0.36</span>
          </Change>
        </PriceCell>
        <Field><FieldLabel>今开</FieldLabel><FieldValue $tone={c.green}>12.36</FieldValue></Field>
        <Field><FieldLabel>最高</FieldLabel><FieldValue $tone={c.red}>12.42</FieldValue></Field>
        <Field><FieldLabel>最低</FieldLabel><FieldValue $tone={c.green}>11.91</FieldValue></Field>
        <Field><FieldLabel>换手<Dots /></FieldLabel><FieldValue>4.76%</FieldValue></Field>
        <Field><FieldLabel>总手</FieldLabel><FieldValue>17.06万</FieldValue></Field>
        <Field><FieldLabel>金额</FieldLabel><FieldValue>2.06亿</FieldValue></Field>
        <Field><FieldLabel>总值<Dots /></FieldLabel><FieldValue>43.18亿</FieldValue></Field>
        <Field><FieldLabel>流值</FieldLabel><FieldValue>43.16亿</FieldValue></Field>
        <Field><FieldLabel>市盈<Tiny>动</Tiny><Dots /></FieldLabel><FieldValue $small>130.70</FieldValue></Field>
        <MoreButton>更多</MoreButton>
      </Quote>

      <Notice>
        <Speaker />
        <NoticeText>自选分析：触发重点关注信号，立即点击查看</NoticeText>
        <IconButton aria-label="关闭"><Cross size={31} color="#999" width={3} /></IconButton>
      </Notice>

      <PeriodTabs>
        {periods.map((name) => (
          <PeriodTab key={name} $on={name === period} onClick={() => setPeriod(name)}>{name}</PeriodTab>
        ))}
        <MoreTab>更多<Triangle w={15} h={12} fill="#666" /></MoreTab>
        <IconButton aria-label="设置"><Gear /></IconButton>
      </PeriodTabs>

      <IndicatorBar>
        <Row $gap={13}>
          <SelectBox $w={108}>
            <Select aria-label="主图指标"><option>均线</option></Select>
            <Triangle w={13} h={12} fill="#666" />
          </SelectBox>
          <Reading $tone={c.ink}>MA5:12.75<Arrow /></Reading>
          <Reading $tone={c.ma10}>10:12.29<Arrow up /></Reading>
          <Reading $tone={c.ma20}>20:11.46<Arrow up /></Reading>
        </Row>
        <Row $gap={39}>
          <ChipButton>
            DK点
            <svg width="20" height="34" viewBox="0 0 20 34"><path d="M18 22V34H7Z" fill="#222" /></svg>
          </ChipButton>
          <ChipButton>前复权</ChipButton>
        </Row>
      </IndicatorBar>

      <ChartGrid>
        <div>
          <PriceChart />
          <SubBar>
            <SelectBox $w={150}>
              <Select aria-label="副图指标"><option>换手率</option></Select>
              <Triangle w={15} h={12} fill="#666" />
            </SelectBox>
            <SubReadings $gap={14}>
              <Reading $small $tone={c.ink}>4.760<Arrow /></Reading>
              <Reading $small $tone={c.ma10}>MA1:13.380<Arrow /></Reading>
              <Reading $small $tone={c.violet}>MA2:13.710<Arrow /></Reading>
            </SubReadings>
            <Expand aria-label="展开">
              <svg width="18" height="30" viewBox="0 0 18 30" fill="none" stroke="#fff" strokeWidth="4"><path d="M3 2L15 15L3 28" /></svg>
            </Expand>
          </SubBar>
          <TurnoverChart />
        </div>
        <div>
          <ChipChart />
          <Legend>
            <LegendItem><Swatch $c="#5bba45" />套牢</LegendItem>
            <LegendItem><Swatch $c="#e84848" />获利</LegendItem>
          </Legend>
          <dl>
            <Stat><StatName>获利比例</StatName><StatValue>34.94%</StatValue></Stat>
            <Stat><StatName>平均成本</StatName><StatValue>12.17</StatValue></Stat>
          </dl>
          <Segmented>
            {["90%筹码", "70%筹码"].map((name) => (
              <Segment key={name} $on={name === range} aria-pressed={name === range} onClick={() => setRange(name)}>{name}</Segment>
            ))}
          </Segmented>
          <dl>
            <Stat><StatName>价格区间</StatName><StatValue>10.10-13.80</StatValue></Stat>
            <Stat><StatName>集中度</StatName><StatValue>15.47%</StatValue></Stat>
            <Stat><StatName>说明<Info /></StatName><StatValue>2025-12-09</StatValue></Stat>
          </dl>
        </div>
        <Floating>
          <RoundButton aria-label="最早">
            <svg width="30" height="32" viewBox="0 0 30 32" fill="none" stroke="currentColor" strokeWidth="3"><path d="M17 2L3 16L17 30M28 2L14 16L28 30" /></svg>
          </RoundButton>
          <RoundButton aria-label="缩小">
            <svg width="34" height="34" viewBox="0 0 34 34" stroke="currentColor" strokeWidth="3"><path d="M0 17H34" /></svg>
          </RoundButton>
          <RoundButton aria-label="放大">
            <svg width="34" height="34" viewBox="0 0 34 34" stroke="currentColor" strokeWidth="3"><path d="M0 17H34M17 0V34" /></svg>
          </RoundButton>
          <RoundButton aria-label="左移">
            <svg width="20" height="32" viewBox="0 0 20 32" fill="none" stroke="currentColor" strokeWidth="3"><path d="M17 1L3 16L17 31" /></svg>
          </RoundButton>
          <RoundButton $grey aria-label="右移">
            <svg width="20" height="32" viewBox="0 0 20 32" fill="none" stroke="currentColor" strokeWidth="3"><path d="M3 1L17 16L3 31" /></svg>
          </RoundButton>
          <RoundButton aria-label="全屏">
            <svg width="34" height="34" viewBox="0 0 34 34" fill="none" stroke="currentColor" strokeWidth="4"><path d="M2 16V2H16M2 2L14 14M20 20L32 32M32 18V32H18" /></svg>
          </RoundButton>
        </Floating>
      </ChartGrid>

      <AskSection>
        <AskBox onSubmit={(e) => e.preventDefault()}>
          <AskLogo>问Ai</AskLogo>
          <AskInput aria-label="问AI" placeholder="整理股吧最新的热点话题，给出热点分析..." />
          <Send aria-label="发送">
            <svg width="44" height="40" viewBox="0 0 44 40" fill="none" stroke="#fff" strokeWidth="5" strokeLinecap="round" strokeLinejoin="round">
              <path d="M3 20H41M25 4L41 20L25 36" />
            </svg>
          </Send>
        </AskBox>
      </AskSection>

      <Banner>
        <Horn />
        <Marquee>
          <span>有奖】恭喜获得好运！红包无限拿，华为耳机带回家！</span>
          <svg width="18" height="20" viewBox="0 0 18 20" fill="none" stroke="currentColor" strokeWidth="3"><path d="M2 2L15 10L2 18" /></svg>
        </Marquee>
        <Divider />
        <IconButton aria-label="关闭"><Cross size={34} color="#e2580f" width={3} /></IconButton>
      </Banner>

      <SectionTabs>
        {sections.map((name) => (
          <Tab key={name} $on={name === section} onClick={() => setSection(name)}>{name}</Tab>
        ))}
      </SectionTabs>

      <BottomNav>
        <IndexCell>
          <Triangle w={20} h={8} fill="#777" up />
          <IndexValue>3916.16</IndexValue>
          <IndexRow>
            <IndexName>上证</IndexName>
            <span>−0.20%</span>
          </IndexRow>
        </IndexCell>
        <NavItem><Trade />交易</NavItem>
        <NavItem><Compose />发帖</NavItem>
        <NavItem><Features />功能</NavItem>
        <NavItem><Ellipsis />设自选</NavItem>
      </BottomNav>
    </Page>
  );
}
